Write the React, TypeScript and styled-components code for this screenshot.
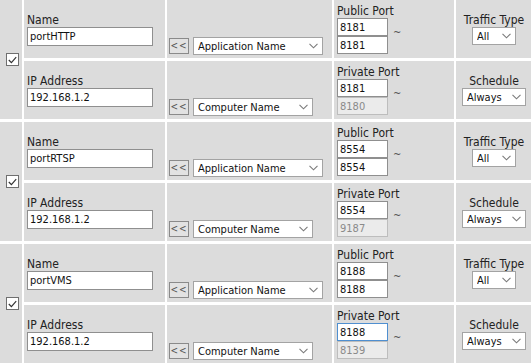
import React from "react";
import styled, { createGlobalStyle } from "styled-components";

const font = `"DejaVu Sans Condensed", "DejaVu Sans", Tahoma, sans-serif`;

const GlobalStyle = createGlobalStyle`
    html, body {
        margin: 0;
        padding: 0;
        background: #ffffff;
    }
    body {
        font-family: ${font};
        font-size: 12px;
        color: #222222;
    }
`;

const Frame = styled.div`
    width: 531px;
    height: 363px;
    overflow: hidden;
    background: #ffffff;
`;

const RulesTable = styled.table`
    border-collapse: separate;
    border-spacing: 2px 3px;
    table-layout: fixed;
    width: 536px;
    margin: -3px 0 0 -2px;
`;

const Row = styled.tr`
    height: 58px;
`;

const Cell = styled.td<{ $center?: boolean; $bottom?: boolean }>`
    box-sizing: border-box;
    background: #dcdcdc;
    padding: ${(p) => (p.$bottom ? "0 2px 3px" : "0 3px")};
    vertical-align: ${(p) => (p.$bottom ? "bottom" : "middle")};
    text-align: ${(p) => (p.$center ? "center" : "left")};
`;

const CheckCell = styled(Cell)`
    padding: 0;
    text-align: center;
    line-height: 0;
`;

const CheckBox = styled.span`
    display: inline-flex;
    align-items: center;
    justify-content: center;
    box-sizing: border-box;
    width: 13px;
    height: 13px;
    margin: 0 0 0 2px;
    background: #ffffff;
    border: 1px solid #6f6f6f;
`;

const Label = styled.div`
    font-size: 12px;
    line-height: 14px;
    color: #222222;
    white-space: nowrap;
`;

const TextInput = styled.input<{ $w: number; $focus?: boolean }>`
    display: block;
    box-sizing: border-box;
    width: ${(p) => p.$w}px;
    height: 19px;
    margin: 0;
    padding: 0 2px;
    font-family: ${font};
    font-size: 11px;
    color: #111111;
    background: #ffffff;
    border: 1px solid ${(p) => (p.$focus ? "#4f8fd0" : "#8f8f8f")};
    border-radius: 0;
    outline: none;

    &:disabled {
        background: #ebebeb;
        border-color: #bdbdbd;
        color: #8a8a8a;
    }
`;

const PortInput = styled(TextInput)`
    height: 18px;
`;

const PickRow = styled.div`
    display: flex;
    align-items: center;
    gap: 4px;
`;

const CopyButton = styled.button`
    box-sizing: border-box;
    width: 20px;
    height: 16px;
    margin: 0;
    padding: 0;
    font-family: ${font};
    font-size: 10px;
    line-height: 14px;
    color: #555555;
    background: #e2e2e2;
    border: 1px solid #8a8a8a;
    border-radius: 0;
    letter-spacing: 1px;
`;

const SelectWrap = styled.span<{ $w: number }>`
    position: relative;
    display: inline-block;
    width: ${(p) => p.$w}px;
    height: 18px;
    vertical-align: top;
`;

const Select = styled.select`
    appearance: none;
    box-sizing: border-box;
    width: 100%;
    height: 100%;
    margin: 0;
    padding: 0 0 0 4px;
    font-family: ${font};
    font-size: 11px;
    color: #111111;
    background: #ffffff;
    border: 1px solid #a3a3a3;
    border-radius: 0;
    outline: none;
`;

const Chevron = styled.svg`
    position: absolute;
    right: 5px;
    top: 6px;
    pointer-events: none;
`;

const PortRow = styled.div`
    display: flex;
    align-items: flex-start;
`;

const PortStack = styled.div`
    display: flex;
    flex-direction: column;
`;

const Tilde = styled.span`
    margin: 8px 0 0 5px;
    font-size: 11px;
    line-height: 14px;
    color: #555555;
`;

const SideBlock = styled.div`
    display: flex;
    flex-direction: column;
    align-items: center;
`;

type Rule = {
    name: string;
    ip: string;
    pubStart: string;
    pubEnd: string;
    privStart: string;
    privEnd: string;
    focusPrivate?: boolean;
};

const rules: Rule[] = [
    { name: "portHTTP", ip: "192.168.1.2", pubStart: "8181", pubEnd: "8181", privStart: "8181", privEnd: "8180" },
    { name: "portRTSP", ip: "192.168.1.2", pubStart: "8554", pubEnd: "8554", privStart: "8554", privEnd: "9187" },
    {
        name: "portVMS",
        ip: "192.168.1.2",
        pubStart: "8188",
        pubEnd: "8188",
        privStart: "8188",
        privEnd: "8139",
        focusPrivate: true,
    },
];

const DropDown = ({ width, value }: { width: number; value: string }) => (
    <SelectWrap $w={width}>
        <Select defaultValue={value}>
            <option>{value}</option>
        </Select>
        <Chevron width="9" height="6" viewBox="0 0 9 6">
            <path d="M0.5 0.8 L4.5 4.8 L8.5 0.8" fill="none" stroke="#7a7a7a" strokeWidth="1.1" />
        </Chevron>
    </SelectWrap>
);

const Picker = ({ width, value }: { width: number; value: string }) => (
    <PickRow>
        <CopyButton>&lt;&lt;</CopyButton>
        <DropDown width={width} value={value} />
    </PickRow>
);

const Ports = ({ label, start, end, disabled, focus }: {
    label: string;
    start: string;
    end: string;
    disabled?: boolean;
    focus?: boolean;
}) => (
    <>
        <Label>{label}</Label>
        <PortRow>
            <PortStack>
                <PortInput $w={51} $focus={focus} defaultValue={start} />
                <PortInput $w={51} defaultValue={end} disabled={disabled} />
            </PortStack>
            <Tilde>~</Tilde>
        </PortRow>
    </>
);

const RuleRows = ({ rule }: { rule: Rule }) => (
    <>
        <Row>
            <CheckCell rowSpan={2}>
                <CheckBox>
                    <svg width="9" height="8" viewBox="0 0 9 8">
                        <path d="M0.8 4 L3.4 6.6 L8.2 1.2" fill="none" stroke="#333" strokeWidth="1.2" />
                    </svg>
                </CheckBox>
            </CheckCell>
            <Cell>
                <Label>Name</Label>
                <TextInput $w={126} defaultValue={rule.name} />
            </Cell>
            <Cell $bottom>
                <Picker width={130} value="Application Name" />
            </Cell>
            <Cell>
                <Ports label="Public Port" start={rule.pubStart} end={rule.pubEnd} />
            </Cell>
            <Cell $center>
                <SideBlock>
                    <Label>Traffic Type</Label>
                    <DropDown width={44} value="All" />
                </SideBlock>
            </Cell>
        </Row>
        <Row>
            <Cell>
                <Label>IP Address</Label>
                <TextInput $w={126} defaultValue={rule.ip} />
            </Cell>
            <Cell $bottom>
                <Picker width={120} value="Computer Name" />
            </Cell>
            <Cell>
                <Ports
                    label="Private Port"
                    start={rule.privStart}
                    end={rule.privEnd}
                    disabled
                    focus={rule.focusPrivate}
                />
            </Cell>
            <Cell $center>
                <SideBlock>
                    <Label>Schedule</Label>
                    <DropDown width={64} value="Always" />
                </SideBlock>
            </Cell>
        </Row>
    </>
);

const App = () => {
    return (
        <Frame>
            <GlobalStyle />
            <RulesTable>
                <colgroup>
                    <col style={{ width: 22 }} />
                    <col style={{ width: 141 }} />
                    <col style={{ width: 165 }} />
                    <col style={{ width: 120 }} />
                    <col style={{ width: 76 }} />
                </colgroup>
                <tbody>
                    {rules.map((rule) => (
                        <RuleRows key={rule.name} rule={rule} />
                    ))}
                </tbody>
            </RulesTable>
        </Frame>
    );
};

export default App;
